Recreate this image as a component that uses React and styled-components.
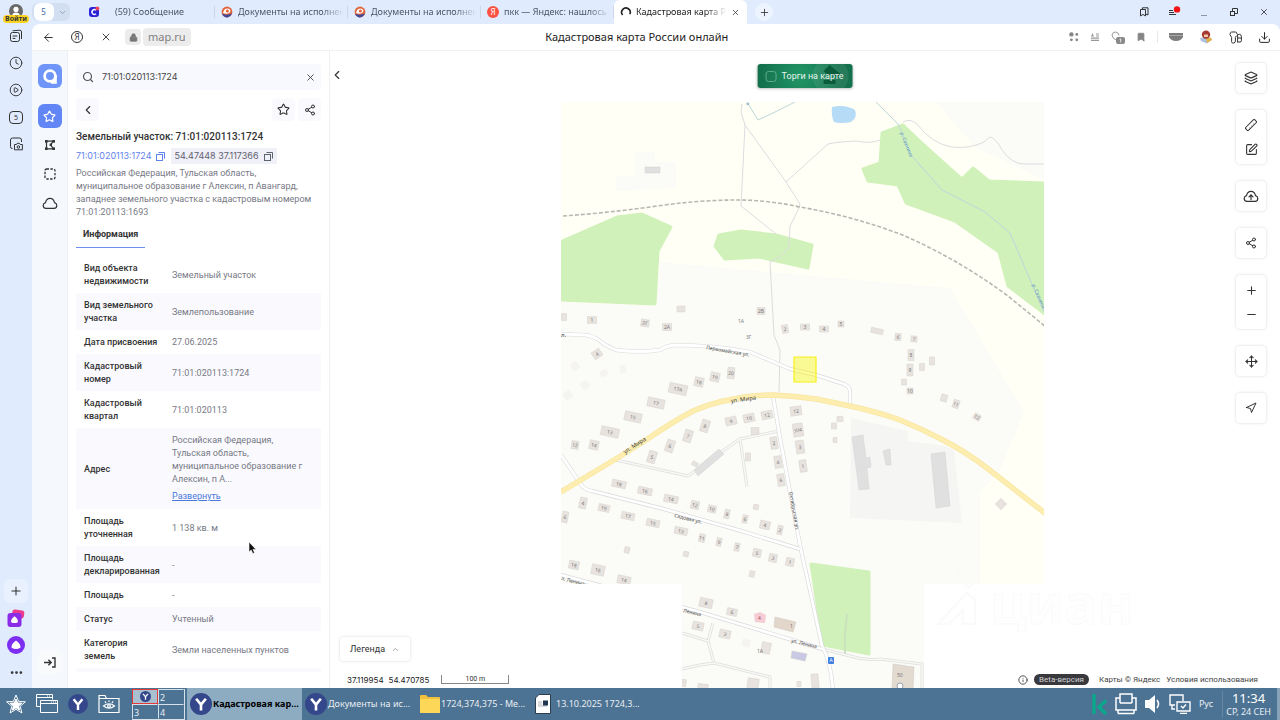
import React from "react";
import styled, { createGlobalStyle } from "styled-components";
import {
  ArrowLeft,
  Bookmark,
  ChevronDown,
  ChevronLeft,
  ChevronUp,
  CirclePlay,
  Clock,
  Download,
  Ellipsis,
  Info,
  Layers,
  Lock,
  Minus,
  Move,
  Navigation,
  Plus,
  Search,
  Share2,
  SquarePen,
  Star,
  X,
} from "lucide-react";

const TABS = [
  { title: "(59) Сообщение", icon: "c", wide: true },
  { title: "Документы на исполнен", icon: "e" },
  { title: "Документы на исполнен", icon: "e" },
  { title: "пкк — Яндекс: нашлось", icon: "ya" },
  { title: "Кадастровая карта Ро", icon: "load", active: true },
];

const FIELDS = [
  ["Вид объекта недвижимости", "Земельный участок"],
  ["Вид земельного участка", "Землепользование"],
  ["Дата присвоения", "27.06.2025"],
  ["Кадастровый номер", "71:01:020113:1724"],
  ["Кадастровый квартал", "71:01:020113"],
  [
    "Адрес",
    "Российская Федерация, Тульская область, муниципальное образование г Алексин, п А...",
    true,
  ],
  ["Площадь уточненная", "1 138 кв. м"],
  ["Площадь декларированная", "-"],
  ["Площадь", "-"],
  ["Статус", "Учтенный"],
  ["Категория земель", "Земли населенных пунктов"],
];

// x, y (center), width, height, angle, label
const HOUSES = [
  [564, 317, 5, 7, 0, ""],
  [592, 320, 9, 7, 0, "1"],
  [645, 323, 8, 7, 8, "2Г"],
  [667, 327, 9, 7, 0, "2А"],
  [681, 309, 8, 6, 0, ""],
  [761, 311, 8, 7, 0, "2В"],
  [785, 329, 6, 8, -10, "2"],
  [805, 327, 9, 6, 0, "3"],
  [824, 329, 9, 6, 0, "4"],
  [841, 324, 6, 6, 0, "5"],
  [877, 331, 12, 5, 12, ""],
  [898, 337, 6, 7, 5, "6"],
  [914, 339, 6, 6, 5, "7"],
  [911, 355, 6, 11, 0, "8"],
  [910, 370, 6, 12, 0, "9"],
  [904, 382, 5, 6, 0, ""],
  [910, 391, 6, 6, 0, "10"],
  [922, 367, 5, 7, 0, ""],
  [932, 361, 5, 8, 0, ""],
  [944, 398, 6, 7, 15, ""],
  [956, 404, 6, 8, 20, "11"],
  [977, 417, 7, 6, 30, "12"],
  [597, 354, 9, 8, -35, "4"],
  [731, 373, 7, 11, 5, "20"],
  [715, 377, 9, 9, 12, "19"],
  [699, 382, 9, 9, 12, "18"],
  [678, 389, 18, 10, 12, "17А"],
  [656, 403, 17, 9, 12, "17"],
  [633, 417, 17, 9, 12, "15"],
  [610, 432, 18, 9, 12, "13"],
  [594, 445, 9, 9, 12, "14"],
  [575, 445, 7, 8, 8, "12"],
  [652, 457, 8, 12, 18, "5"],
  [670, 446, 8, 12, 18, "6"],
  [688, 436, 8, 12, 18, "7"],
  [705, 426, 8, 12, 18, "8"],
  [731, 421, 11, 8, -12, "9"],
  [749, 418, 11, 8, -12, "10"],
  [767, 415, 11, 8, -12, "12"],
  [796, 411, 11, 9, -8, "12"],
  [798, 430, 10, 13, -8, "У/4"],
  [800, 447, 8, 13, -8, "3"],
  [803, 466, 7, 12, -8, "1"],
  [774, 443, 7, 12, -8, "2"],
  [778, 462, 7, 12, -8, "4"],
  [781, 480, 7, 12, -8, "6"],
  [755, 431, 8, 7, 0, ""],
  [748, 457, 5, 8, 0, ""],
  [695, 464, 6, 4, 30, ""],
  [834, 426, 5, 6, 0, ""],
  [840, 419, 6, 5, 0, ""],
  [835, 440, 4, 5, 0, ""],
  [1001, 504, 8, 8, 45, ""],
  [619, 484, 14, 7, 12, "18"],
  [645, 491, 14, 7, 12, "16"],
  [671, 499, 14, 7, 12, "14"],
  [695, 505, 8, 8, 12, "12"],
  [712, 509, 8, 7, 12, "10"],
  [727, 514, 5, 9, 12, "8"],
  [745, 519, 5, 8, 12, "6"],
  [765, 525, 10, 8, 12, "4"],
  [780, 530, 5, 9, 12, "2"],
  [756, 507, 5, 5, 12, ""],
  [583, 503, 7, 11, 12, "4"],
  [565, 517, 6, 11, 12, "6"],
  [604, 508, 11, 7, 12, "19"],
  [628, 516, 13, 7, 12, "17"],
  [653, 523, 13, 7, 12, "15"],
  [681, 531, 13, 7, 12, "13"],
  [702, 538, 6, 8, 12, "11"],
  [719, 542, 5, 8, 12, "9"],
  [737, 547, 5, 8, 12, "7"],
  [757, 553, 8, 8, 12, "5"],
  [773, 558, 8, 8, 12, "3"],
  [790, 562, 8, 8, 12, "1"],
  [627, 550, 5, 6, 12, ""],
  [686, 554, 5, 5, 12, ""],
  [752, 574, 5, 6, 12, ""],
  [574, 565, 10, 8, 12, "18"],
  [598, 570, 13, 10, 12, "16"],
  [624, 580, 13, 8, 12, "14"],
  [706, 603, 13, 9, 12, "8"],
  [732, 612, 10, 7, 12, "6"],
  [698, 626, 11, 8, 12, "5"],
  [725, 634, 11, 8, 12, "3"],
  [766, 648, 9, 11, 12, ""],
  [753, 684, 11, 11, 8, ""],
  [799, 684, 4, 5, 0, ""],
  [815, 681, 7, 14, -5, ""],
  [703, 686, 10, 4, 8, ""],
  [684, 683, 4, 7, 8, ""],
];

const FAINT_HOUSES = [
  [575, 366, 8, 8, -35, ""],
  [604, 373, 8, 7, -25, ""],
  [623, 369, 6, 8, -10, ""],
  [585, 385, 8, 8, -35, ""],
  [568, 395, 8, 8, -35, ""],
  [746, 643, 8, 8, 12, ""],
];

const ROADS = [
  "M561 334L585 335Q594 336 600 341T616 350Q640 353 660 350Q666 346 674 345Q712 345 750 352L790 369L816 375L844 384Q850 387 850 391V404",
  "M773 396L779 432L789 487L801 550L813 604L822 646Q831 662 833 690",
  "M561 455L580 483Q584 490 592 491L660 508L738 530L800 549",
  "M561 575L700 612L822 649",
];

const LANES = [
  "M616 460L688 476L695 471M721 452L740 439L779 431M740 439L747 487",
  "M713 623L708 641L714 663L770 677V690",
  "M682 633L708 641M682 669L700 665L714 663",
  "M822 649L850 656Q865 661 880 659L922 664V690",
];

const PATHS =
  "M742 104L741 112L745 125L741 206L776 234M745 125L786 182L800 204L799 208L790 226L789 246Q784 256 770 262L774 335L780 350L779 392M786 182L828 144Q836 142 856 141Q870 144 880 140M903 122Q910 118 917 124Q932 144 952 147Q970 149 984 142L990 137Q996 138 1002 150Q1012 164 1024 164H1044";

const MAIN_ROAD =
  "M561 492L619 457L646 440Q672 422 693 411Q712 403 729 400Q750 395 773 395Q795 396 816 399L850 406Q878 412 900 420Q922 429 943 440Q966 452 987 468L1046 514";

function Building({ house, faint }) {
  const [x, y, w, h, angle, label] = house;
  return (
    <g transform={`translate(${x} ${y}) rotate(${angle})`}>
      <rect
        x={-w / 2}
        y={-h / 2}
        width={w}
        height={h}
        fill={faint ? "#f5f4f1" : "#e8e3df"}
        stroke={faint ? "none" : "#d6d0cc"}
        strokeWidth="0.5"
      />
      {label && (
        <MapText y="2" textAnchor="middle" $size={5}>
          {label}
        </MapText>
      )}
    </g>
  );
}

function CadastralMap() {
  return (
    <MapDrawing viewBox="330 51 950 637" preserveAspectRatio="xMidYMin slice">
      <clipPath id="tiles">
        <path d="M561 102H1044V584H924V690H682V584H561Z" />
      </clipPath>
      <g clipPath="url(#tiles)" strokeLinejoin="round" fill="none">
        <rect x="561" y="102" width="483" height="590" fill="#fffff5" />
        <path
          d="M936 102L975 147L1044 180V102ZM635 152H655V162H676V188L616 191V176H635Z"
          fill="#fbfcf7"
        />
        <path
          d="M660 262L813 276L950 288L1024 412L1000 470L980 492V690H561V302L656 306Z"
          fill="#fbfcf7"
        />
        <path
          d="M851 418L908 431V441L945 446L954 450L962 523L850 518Z"
          fill="#f5f6f4"
        />
        <g fill="#d1f1ba" stroke="#d1f1ba" strokeWidth="3">
          <path d="M560 242L617 217L642 214L671 227L658 251L655 304L560 300Z" />
          <path d="M719 235L741 231L776 235L812 245L808 268L759 257L725 259L715 246Z" />
          <path d="M882 133L903 125L923 144L962 179L973 168L989 181L1046 183V315L1008 286L999 252L955 221L906 203L898 185L868 181L863 169L880 163Z" />
          <path d="M811 564L869 572V654L823 645Z" />
        </g>
        <path
          d="M832 107Q845 104 855 110Q858 117 851 122Q840 124 834 122Q831 116 832 107Z"
          fill="#b5dbf7"
        />
        <path d={PATHS} stroke="#dcdce0" />
        <path d="M847 614L845 634L845 655" stroke="#c9e2bb" strokeWidth="2" />
        <path
          d="M747 102L758 120L775 112L795 102M876 102L898 124L912 156L942 190L985 212L1010 233L1044 312"
          stroke="#bcd6dc"
        />
        {LANES.map((d) => (
          <g key={d}>
            <path d={d} stroke="#dededd" strokeWidth="3" />
            <path d={d} stroke="#f8f8f6" strokeWidth="1.6" />
          </g>
        ))}
        {ROADS.map((d) => (
          <g key={d}>
            <path d={d} stroke="#d9d9dc" strokeWidth="4" />
            <path d={d} stroke="#ffffff" strokeWidth="2.8" />
          </g>
        ))}
        <path d={MAIN_ROAD} stroke="#f8e5a2" strokeWidth="5.4" />
        <path d={MAIN_ROAD} stroke="#fdeeb0" strokeWidth="4" />
        <path
          d="M563 216Q606 213 650 207Q696 200 737 200Q768 200 800 207Q852 216 900 234Q955 257 1008 296L1046 327"
          stroke="#b9b6b3"
          strokeWidth="1.6"
          strokeDasharray="4 2"
        />
        <g fill="#e0e0e0" stroke="#d2d2d2" strokeWidth="0.5">
          <path d="M852 437L863 435L866 458L870 457L871 467L867 468L869 489L859 490Z" />
          <path d="M883 451L890 449L891 465L886 465Z" />
          <path d="M931 454L945 452L950 506L936 508Z" />
          <path d="M694 470L719 449L724 454L698 476Z" />
          <path d="M645 167H660V173H645Z" />
        </g>
        {FAINT_HOUSES.map((h) => (
          <Building key={h.join()} house={h} faint />
        ))}
        {HOUSES.map((h) => (
          <Building key={h.join()} house={h} />
        ))}
        <g stroke="#cfc8c2" strokeWidth="0.5">
          <path d="M754 614L760 612L766 615L765 623L755 622Z" fill="#f4cdd4" stroke="none" />
          <path d="M775 617L796 622L793 632L774 627Z" fill="#e3d6ca" />
          <path d="M792 651L807 654L805 661L791 658Z" fill="#c9c9e6" />
          <path d="M893 664L914 667L913 690H892Z" fill="#e3dad0" />
        </g>
        <rect
          x="794"
          y="357"
          width="22"
          height="25"
          fill="#fbf700"
          fillOpacity="0.4"
          stroke="#f7f01a"
          strokeWidth="1.2"
        />
        <rect x="828" y="657" width="6" height="7" rx="1" fill="#3f7fe0" />
        <MapText x="831" y="662" textAnchor="middle" $size={5} $color="#fff">
          А
        </MapText>
        <circle cx="900" cy="686" r="3" fill="#fff" stroke="#9aa1b5" />
        <MapText x="758" y="620" $size={5} $color="#b0455a">4</MapText>
        <MapText x="790" y="628" $size={5}>1</MapText>
        <MapText x="897" y="677" $size={5}>50</MapText>
        <MapText x="757" y="653" $size={5}>1А</MapText>
        <MapText x="738" y="323" $size={5}>1А</MapText>
        <MapText x="746" y="339" $size={5}>3Г</MapText>
        <MapText x="561" y="337" $size={6} $color="#444">л.</MapText>

        <MapText transform="translate(706 349) rotate(10)" $size={5} $color="#444">
          Первомайская ул.
        </MapText>
        <MapText transform="translate(731 403) rotate(-8)" $size={6} $color="#444">
          ул. Мира
        </MapText>
        <MapText transform="translate(625 454) rotate(-33)" $size={6} $color="#444">
          ул. Мира
        </MapText>
        <MapText transform="translate(674 517) rotate(14)" $size={5} $color="#444">
          Садовая ул.
        </MapText>
        <MapText transform="translate(789 492) rotate(80)" $size={5} $color="#444">
          Октябрьская ул.
        </MapText>
        <MapText transform="translate(561 580) rotate(14)" $size={5} $color="#444">
          л. Ленина
        </MapText>
        <MapText transform="translate(683 612) rotate(14)" $size={5} $color="#444">
          Ленина
        </MapText>
        <MapText transform="translate(791 642) rotate(14)" $size={5} $color="#444">
          ул. Ленина
        </MapText>
        <MapText transform="translate(900 133) rotate(68)" $size={5} $color="#5b94c0">
          р. Сазнина
        </MapText>
        <MapText transform="translate(1032 285) rotate(66)" $size={5} $color="#5b94c0">
          р. Сазнина
        </MapText>
        <MapText transform="translate(746 103) rotate(70)" $size={5} $color="#5b94c0">
          а
        </MapText>
      </g>
      <g fill="none" stroke="#fafaf9" strokeWidth="2">
        <circle cx="969" cy="572" r="5" />
        <path d="M969 588Q957 578 959 569Q962 561 970 561Q980 562 979 573Q977 580 969 588ZM938 624L967 593L975 600V624H963V610L949 624Z" />
      </g>
      <Brand x="990" y="624">
        циан
      </Brand>
    </MapDrawing>
  );
}

function TabIcon({ kind }) {
  return (
    <svg width="12" height="12" viewBox="0 0 12 12" fill="none">
      {kind === "c" && (
        <>
          <rect x="1" y="1" width="10" height="10" rx="3" fill="#2b22d8" />
          <path d="M8 4.2A2.4 2.4 0 1 0 8 7.8" stroke="#fff" strokeWidth="1.4" />
          <circle cx="9.4" cy="2.6" r="2" fill="#f0455b" />
        </>
      )}
      {kind === "e" && (
        <>
          <circle cx="6" cy="6" r="5.4" fill="#e0643c" />
          <path d="M0.8 8Q3 11.4 6 11.4T11 7.6Q7 9.5 0.8 8Z" fill="#3b4a9c" />
          <path d="M2 7Q3 2.4 7 2.6Q11 4 8.4 6.8Q5.4 8.6 2 7Z" fill="#fff" />
          <circle cx="6.4" cy="5" r="1.5" fill="#e0643c" />
        </>
      )}
      {kind === "load" && (
        <path
          d="M2.6 9A4.3 4.3 0 1 1 9.8 8.2"
          stroke="#222"
          strokeWidth="1.6"
        />
      )}
    </svg>
  );
}

function YandexBall({ size = 20 }) {
  return (
    <svg width={size} height={size} viewBox="0 0 20 20" fill="none">
      <circle cx="10" cy="10" r="10" fill="#34478b" />
      <path
        d="M5.6 5.2L10 10.6L14.4 5.2M10 10.6V16"
        stroke="#fff"
        strokeWidth="2.4"
      />
    </svg>
  );
}

function CloudIcon({ upload }) {
  return (
    <svg width="16" height="13" viewBox="0 0 16 13" fill="none" stroke="#333" strokeWidth="1.2" strokeLinecap="round">
      <path d="M4 11.4Q1.2 11.2 1.2 8.4Q1.2 6.2 3.5 5.6Q4.4 1.4 8 1.4T12.5 5.6Q14.8 6.2 14.8 8.4Q14.8 11.2 12 11.4Z" />
      {upload && <path d="M8 9.6V5M6 6.8L8 4.8L10 6.8" />}
    </svg>
  );
}

function CopyIcon() {
  return (
    <svg width="9" height="9" viewBox="0 0 9 9" fill="none" stroke="currentColor">
      <rect x="0.5" y="2.5" width="6" height="6" />
      <path d="M2.5 0.5H8.5V6.5" />
    </svg>
  );
}

export default function App() {
  return (
    <>
      <GlobalStyle />
      <Screen>
        <BrowserSide>
          <Avatar aria-label="Войти">
            <svg width="14" height="11" viewBox="0 0 14 11">
              <circle cx="7" cy="7" r="7" fill="#6a6a6a" />
              <circle cx="7" cy="5.4" r="2.6" fill="#fff" />
              <path d="M2.6 13Q3 8.6 7 8.6T11.4 13Z" fill="#fff" />
            </svg>
            <AvatarLabel>Войти</AvatarLabel>
          </Avatar>
          <SideButton aria-label="Коллекции">
            <svg width="14" height="14" viewBox="0 0 14 14" fill="none" stroke="#333">
              <rect x="1.5" y="3.5" width="9" height="9" rx="2" />
              <path d="M3.5 1.8L11 1.2Q12.6 1.4 12.5 3V10M3.6 7H8.4M3.6 9.4H6.4" />
            </svg>
          </SideButton>
          <SideButton aria-label="История"><Clock size={14} strokeWidth={1.6} /></SideButton>
          <SideButton aria-label="Видео"><CirclePlay size={14} strokeWidth={1.6} /></SideButton>
          <SideButton aria-label="Вкладки"><TabCount>5</TabCount></SideButton>
          <SideButton aria-label="Скриншот">
            <svg width="14" height="14" viewBox="0 0 14 14" fill="none" stroke="#333">
              <path d="M3.5 11.5H3Q1.5 11.5 1.5 9.5V3Q1.5 1 3.5 1H10.5Q12.5 1 12.5 3V5" />
              <path d="M5.5 7.5H7.5L8.2 6.3H10.4L11.2 7.5H13.4V12.8H5.5Z" />
              <circle cx="9.4" cy="10" r="1.3" />
            </svg>
          </SideButton>
          <SideSpacer />
          <SideButton $light aria-label="Добавить"><Plus size={14} strokeWidth={1.8} /></SideButton>
          <SideButton aria-label="Алиса Про">
            <svg width="18" height="18" viewBox="0 0 18 18">
              <rect x="5" y="1" width="12" height="8" rx="2.5" fill="#ec3a8c" transform="rotate(8 11 6)" />
              <rect x="0.5" y="4" width="14" height="14" rx="3" fill="#8a2be8" />
              <path d="M7.5 7.2Q11.6 10.4 10.8 13.2Q7.5 15 4.2 13.2Q3.4 10.4 7.5 7.2Z" fill="#fff" />
            </svg>
          </SideButton>
          <SideButton aria-label="Алиса">
            <svg width="18" height="18" viewBox="0 0 18 18">
              <circle cx="9" cy="9" r="9" fill="#7b2df0" />
              <path d="M9 4.4Q14.4 8.4 13.4 11.8Q9 14.4 4.6 11.8Q3.6 8.4 9 4.4Z" fill="#fff" />
            </svg>
          </SideButton>
          <SideButton aria-label="Ещё"><Ellipsis size={15} strokeWidth={2.4} /></SideButton>
        </BrowserSide>

        <Browser>
          <TabStrip>
            <TabGroup>
              <GroupNumber>5</GroupNumber>
              <ChevronDown size={9} color="#7f8ea6" />
            </TabGroup>
            {TABS.map((tab, i) => (
              <Tab key={i} $active={tab.active} $wide={tab.wide}>
                {tab.icon === "ya" ? <RedYa>Я</RedYa> : <TabIcon kind={tab.icon} />}
                <TabTitle>{tab.title}</TabTitle>
                {tab.active && <X size={9} color="#333" />}
              </Tab>
            ))}
            <NewTab aria-label="Новая вкладка"><Plus size={11} strokeWidth={1.8} /></NewTab>
            <WindowButtons>
              <WindowButton aria-label="Панель закладок">
                <svg width="10" height="10" viewBox="0 0 10 10" fill="none" stroke="#333">
                  <path d="M1.5 2.5H6.5V9L4 7.4L1.5 9Z" />
                  <path d="M3.4 2.4V0.8H9V8L6.6 7" />
                </svg>
              </WindowButton>
              <WindowButton aria-label="Меню">
                <svg width="14" height="12" viewBox="0 0 14 12" fill="none" stroke="#333">
                  <path d="M2 4.5H6M2 6.5H7M2 8.5H9" />
                  <circle cx="10" cy="3.4" r="3.2" fill="#f31515" stroke="none" />
                </svg>
              </WindowButton>
              <WindowButton aria-label="Свернуть">
                <svg width="8" height="10" viewBox="0 0 8 10" stroke="#8c97a8"><path d="M1 8.5H7" /></svg>
              </WindowButton>
              <WindowButton aria-label="Развернуть окно">
                <svg width="10" height="10" viewBox="0 0 10 10" fill="none" stroke="#333">
                  <rect x="1.5" y="4.5" width="4" height="4" />
                  <path d="M3.5 4V1.5H8.5V6.5H6" />
                </svg>
              </WindowButton>
              <WindowButton aria-label="Закрыть"><X size={10} strokeWidth={2} /></WindowButton>
            </WindowButtons>
          </TabStrip>

          <Page>
            <AddressBar>
              <BarButton aria-label="Назад"><ArrowLeft size={13} strokeWidth={1.8} /></BarButton>
              <BarButton aria-label="Яндекс"><YaBadge>Я</YaBadge></BarButton>
              <BarButton aria-label="Остановить"><X size={12} strokeWidth={1.8} /></BarButton>
              <LockBox><Lock size={9} fill="#777" color="#777" /></LockBox>
              <Host>map.ru</Host>
              <PageTitle>Кадастровая карта России онлайн</PageTitle>
              <Extensions>
                <svg width="10" height="10" viewBox="0 0 10 10" fill="#858585">
                  <circle cx="2.4" cy="2.4" r="2.2" /><circle cx="7.8" cy="2.4" r="1.4" />
                  <circle cx="2.4" cy="7.8" r="1.4" /><circle cx="7.8" cy="7.8" r="1.4" />
                </svg>
                <svg width="10" height="10" viewBox="0 0 10 10" stroke="#999" strokeWidth="1.2">
                  <path d="M1 6.2H9M1 8.4H9M1 4H4M6 4H9M2.5 1.5V4M6 2H9" />
                </svg>
                <svg width="14" height="13" viewBox="0 0 14 13" fill="none" stroke="#999">
                  <path d="M5 9Q1 7 1 4Q1.5 1 4.5 1Q8 1.4 8 4.5" />
                  <rect x="5" y="6" width="9" height="7" rx="2" fill="#8a8a8a" stroke="none" />
                  <path d="M8.6 8.4L9.7 7.8V11.4" stroke="#fff" strokeWidth="0.8" />
                </svg>
                <Bookmark size={10} fill="#858585" color="#858585" />
                <BarDivider />
                <svg width="14" height="8" viewBox="0 0 14 8">
                  <path d="M0 0H14V4Q12 8 7 8T0 4Z" fill="#7d7d7d" />
                  <path d="M0 2.5H14" stroke="#a5a5a5" />
                </svg>
                <svg width="14" height="14" viewBox="0 0 14 14">
                  <path d="M1 8L7 7L13 9L8 13.5L2 11Z" fill="#a9c0e0" />
                  <path d="M7 8L12 7.5L13 10L8 13Z" fill="#e2b24c" />
                  <circle cx="7" cy="4.6" r="4.2" fill="#a63a32" />
                  <path d="M5 4.5H9V7H5Z" fill="#f0c9a8" />
                </svg>
                <svg width="13" height="13" viewBox="0 0 13 13" fill="none" stroke="#333">
                  <path d="M4.8 12H3.6Q2.6 12 2.6 10.6V6.4L1 3.6Q0.8 1.4 2.6 1H6.4Q7.8 1 8 3" />
                  <path d="M4.8 12Q6.4 11.6 6.4 10V6.4L7.6 4.6M8.6 3.4H10.6Q12.4 3.6 12.4 5.4V9.8Q12.4 11 11 11H8M8.6 7H12.4M8.6 3.4V11" />
                </svg>
                <Download size={13} strokeWidth={1.8} color="#222" />
              </Extensions>
            </AddressBar>

            <Site>
              <Rail>
                <RailButton $fill="#6f95f8" aria-label="Главная">
                  <svg width="18" height="18" viewBox="0 0 18 18" fill="none" stroke="#fff" strokeWidth="2.8">
                    <circle cx="9" cy="9" r="5.4" />
                    <path d="M14.4 8V15.4H10" />
                  </svg>
                </RailButton>
                <RailGap />
                <RailButton $fill="#6386f6" aria-label="Избранное">
                  <Star size={13} color="#fff" strokeWidth={2.2} />
                </RailButton>
                <RailButton aria-label="Область">
                  <svg width="12" height="12" viewBox="0 0 12 12" fill="none" stroke="#333" strokeWidth="1.2">
                    <path d="M2.5 1.8V10.2M9.5 1.8L6.6 5.8L9.5 10.2M2.5 2.2H9.5M2.5 9.8H9.5" />
                    <g fill="#333" stroke="none">
                      <rect x="1" y="1" width="2.6" height="2.6" /><rect x="8.4" y="1" width="2.6" height="2.6" />
                      <rect x="1" y="8.4" width="2.6" height="2.6" /><rect x="8.4" y="8.4" width="2.6" height="2.6" />
                      <rect x="5.6" y="4.6" width="2.4" height="2.4" />
                    </g>
                  </svg>
                </RailButton>
                <RailButton aria-label="Выделение">
                  <svg width="12" height="12" viewBox="0 0 12 12" fill="none">
                    <rect x="1" y="1" width="10" height="10" rx="1.6" stroke="#333" strokeWidth="1.3" strokeDasharray="2.4 1.4" />
                  </svg>
                </RailButton>
                <RailButton aria-label="Облако"><CloudIcon /></RailButton>
                <SideSpacer />
                <RailButton $fill="#f9fafc" aria-label="Войти в аккаунт">
                  <svg width="13" height="11" viewBox="0 0 13 11" fill="none" stroke="#333" strokeWidth="1.4">
                    <path d="M1 5.5H8M5.4 2.8L8.2 5.5L5.4 8.2M9 1H12V10H9" />
                  </svg>
                </RailButton>
              </Rail>

              <Panel>
                <SearchBox>
                  <Search size={12} strokeWidth={2.4} color="#555" />
                  <SearchInput aria-label="Поиск" defaultValue="71:01:020113:1724" />
                  <ClearButton aria-label="Очистить"><X size={11} strokeWidth={1.8} /></ClearButton>
                </SearchBox>
                <PanelTools>
                  <ToolButton aria-label="Назад"><ChevronLeft size={14} /></ToolButton>
                  <ToolSpacer />
                  <ToolButton aria-label="В избранное"><Star size={13} /></ToolButton>
                  <ToolButton aria-label="Поделиться"><Share2 size={12} /></ToolButton>
                </PanelTools>
                <Heading>Земельный участок: 71:01:020113:1724</Heading>
                <Identifiers>
                  <CadLink href="#parcel">71:01:020113:1724 <CopyIcon /></CadLink>
                  <Coords>54.47448 37.117366 <CopyIcon /></Coords>
                </Identifiers>
                <Description>
                  Российская Федерация, Тульская область, муниципальное образование г
                  Алексин, п Авангард, западнее земельного участка с кадастровым номером
                  71:01:20113:1693
                </Description>
                <InfoTab>Информация</InfoTab>
                <InfoTable>
                  <tbody>
                    {FIELDS.map(([name, value, expandable]) => (
                      <tr key={name}>
                        <th scope="row">{name}</th>
                        <td>
                          {value}
                          {expandable && <Expand href="#address">Развернуть</Expand>}
                        </td>
                      </tr>
                    ))}
                  </tbody>
                </InfoTable>
              </Panel>

              <MapArea>
                <CadastralMap />
                <CollapseButton aria-label="Свернуть панель"><ChevronLeft size={14} /></CollapseButton>
                <AuctionToggle>
                  <Gavel width="38" height="24" viewBox="0 0 38 24">
                    <circle cx="19" cy="12" r="18" fill="#fff" fillOpacity="0.08" />
                    <path d="M12 7L18 1L29 10L26 13L20 10L17 12Z" fill="#0b5c3d" />
                    <path d="M12 16H24V20H12Z" fill="#0b5c3d" />
                  </Gavel>
                  <AuctionCheck type="checkbox" />
                  <AuctionText>Торги на карте</AuctionText>
                </AuctionToggle>
                <Controls>
                  <Control><MapButton aria-label="Слои"><Layers size={14} /></MapButton></Control>
                  <Control>
                    <MapButton aria-label="Линейка">
                      <svg width="12" height="12" viewBox="0 0 12 12" fill="none" stroke="#333">
                        <rect x="-0.4" y="4" width="12.8" height="4" rx="1.2" transform="rotate(-45 6 6)" />
                        <path d="M4.2 8.6L5 9.4M6.2 6.6L7 7.4M8.2 4.6L9 5.4" strokeWidth="0.6" />
                      </svg>
                    </MapButton>
                    <MapButton aria-label="Редактировать"><SquarePen size={13} /></MapButton>
                  </Control>
                  <Control><MapButton aria-label="Загрузить"><CloudIcon upload /></MapButton></Control>
                  <Control><MapButton aria-label="Поделиться"><Share2 size={12} /></MapButton></Control>
                  <Control>
                    <MapButton aria-label="Приблизить"><Plus size={13} /></MapButton>
                    <MapButton aria-label="Отдалить"><Minus size={13} /></MapButton>
                  </Control>
                  <Control><MapButton aria-label="Переместить"><Move size={13} /></MapButton></Control>
                  <Control><MapButton aria-label="Моё положение"><Navigation size={12} /></MapButton></Control>
                </Controls>
                <Bottom>
                  <Legend>Легенда <ChevronUp size={9} color="#888" /></Legend>
                  <BottomRow>
                    <Position><span>37.119954</span><span>54.470785</span></Position>
                    <Scale>100 m</Scale>
                    <BottomSpacer />
                    <Info size={10} color="#333" />
                    <Beta>Beta-версия</Beta>
                    <MapLink href="#yandex">Карты © Яндекс</MapLink>
                    <MapLink href="#terms">Условия использования</MapLink>
                  </BottomRow>
                </Bottom>
              </MapArea>
            </Site>
          </Page>
        </Browser>

        <Taskbar>
          <Launcher aria-label="Меню">
            <svg width="20" height="20" viewBox="0 0 20 20" fill="none" stroke="#fff">
              <path d="M10 1L12.6 7.4L19.4 7.8L14.2 12.2L15.9 19L10 15.3L4.1 19L5.8 12.2L0.6 7.8L7.4 7.4Z" />
              <path d="M10 5L11.6 9L15.8 9.2L12.6 12L13.6 16L10 13.8L6.4 16L7.4 12L4.2 9.2L8.4 9Z" fill="#fff" />
            </svg>
          </Launcher>
          <Launcher aria-label="Окна">
            <svg width="22" height="20" viewBox="0 0 22 20" fill="none" stroke="#fff">
              <path d="M4.5 12.5H0.5V0.5H16.5V5.5M0.5 3.5H16.5" />
              <path d="M4.5 6.5H21.5V18.5H4.5ZM4.5 9.5H21.5" />
              <path d="M11 2H15M15 8H20" strokeDasharray="1 1" />
            </svg>
          </Launcher>
          <Launcher aria-label="Яндекс Браузер"><YandexBall /></Launcher>
          <Launcher aria-label="Файлы">
            <svg width="22" height="20" viewBox="0 0 22 20" fill="none" stroke="#fff" strokeWidth="1.2">
              <path d="M1 18.5V1.5H7L8.5 4.5H21V18.5ZM1 4.5H8.5" />
              <path d="M5.5 12Q11 7.5 16.5 12Q11 16.5 5.5 12ZM11 6.5V8M7 7.4L8 9M15 7.4L14 9" />
              <circle cx="11" cy="12" r="1.4" />
            </svg>
          </Launcher>
          <Pager>
            <PagerCell $current><YandexBall size={11} /></PagerCell>
            <PagerCell>2</PagerCell>
            <PagerCell>3</PagerCell>
            <PagerCell>4</PagerCell>
          </Pager>
          <Task $active><YandexBall size={22} />Кадастровая кар...</Task>
          <Task><YandexBall size={22} />Документы на ис...</Task>
          <Task>
            <svg width="20" height="20" viewBox="0 0 20 20">
              <path d="M0 2Q0 1 1 1H6L8 3H19Q20 3 20 4V19H0Z" fill="#f0bf3e" />
              <path d="M0 5H20V18Q20 19 19 19H1Q0 19 0 18Z" fill="#fdd757" />
            </svg>
            1724,374,375 - Ме...
          </Task>
          <Task $doc>
            <svg width="16" height="20" viewBox="0 0 16 20">
              <path d="M4 0.5H15.5V19.5H0.5V4Z" fill="#fff" stroke="#2e3d4c" />
              <path d="M3 8H7M3 10H7M3 12H12" stroke="#b5b5b5" />
              <rect x="8" y="6.5" width="5" height="5" fill="#1f3550" />
            </svg>
            13.10.2025 1724,3...
          </Task>
          <Tray>
            <svg width="15" height="22" viewBox="0 0 15 22" fill="none" stroke="#0aa78c" strokeWidth="3.4">
              <path d="M2 1V21M14 7.5L7 14L14 21" />
            </svg>
            <svg width="22" height="22" viewBox="0 0 22 22" fill="none" stroke="#fff" strokeWidth="1.5">
              <path d="M5 10V1H17V10M5 5H1V17H21V5H17M5 10H17M3 20.5H19M3 17V20.5M19 17V20.5" />
            </svg>
            <svg width="16" height="18" viewBox="0 0 16 18" fill="#fff">
              <path d="M0 5H4L10 0V18L4 13H0Z" />
              <path d="M12 5Q15 9 12 13" fill="none" stroke="#fff" strokeWidth="1.6" />
            </svg>
            <svg width="22" height="20" viewBox="0 0 22 20" fill="none" stroke="#fff" strokeWidth="1.4">
              <path d="M6 11H1V1H14V7M8 8H21V17H8ZM11 19.5H18M3 11V15H6" />
              <path d="M12 12L14 14L17 10.5" />
            </svg>
            <Lang>Рус</Lang>
            <ClockBox>
              <Time>11:34</Time>
              <DateText>СР, 24 СЕН</DateText>
            </ClockBox>
          </Tray>
        </Taskbar>
        <Cursor width="9" height="14" viewBox="0 0 9 14">
          <path d="M1 1V11L3.2 9L4.8 12.6L6.6 11.8L5 8.4H8Z" fill="#111" stroke="#fff" strokeWidth="0.6" />
        </Cursor>
      </Screen>
    </>
  );
}

const GlobalStyle = createGlobalStyle`
  * {
    box-sizing: border-box;
  }

  body {
    margin: 0;
    font-family: Roboto, sans-serif;
    color: #333;
  }

  button {
    display: flex;
    align-items: center;
    justify-content: center;
    border: 0;
    padding: 0;
    background: none;
    color: #333;
    font-family: inherit;
  }

  svg {
    flex-shrink: 0;
  }
`;

const Screen = styled.div`
  display: grid;
  grid-template-columns: 32px 1fr;
  grid-template-rows: minmax(0, 1fr) 32px;
  height: 100vh;
  background: #e0ecfe;
  overflow: hidden;
`;

const BrowserSide = styled.nav`
  display: flex;
  flex-direction: column;
  align-items: center;
  padding: 3px 0 1px;
`;

const Avatar = styled.button`
  flex-direction: column;
  height: 21px;
`;

const AvatarLabel = styled.span`
  padding: 0 2px;
  border-radius: 4px;
  background: #fbd323;
  font: 700 7px/8px "Noto Sans", sans-serif;
`;

const SideButton = styled.button`
  width: 24px;
  height: 24px;
  margin-bottom: 3px;
  border-radius: 6px;
  background: ${(props) => (props.$light ? "#e9f1fe" : "none")};
`;

const SideSpacer = styled.div`
  flex: 1;
`;

const TabCount = styled.span`
  width: 14px;
  border: 1px solid #333;
  border-radius: 4px;
  font: 7px/11px "Noto Sans", sans-serif;
`;

const Browser = styled.div`
  display: flex;
  flex-direction: column;
  min-width: 0;
  min-height: 0;
`;

const TabStrip = styled.header`
  display: flex;
  height: 24px;
  flex-shrink: 0;
  align-items: center;
  font: 9px/12px "Noto Sans", sans-serif;
`;

const TabGroup = styled.button`
  width: 38px;
  height: 18px;
  margin-right: 12px;
  gap: 4px;
  border-radius: 6px;
  background: #d2dff2;
`;

const GroupNumber = styled.span`
  width: 20px;
  margin-left: -2px;
  border-radius: 6px;
  background: #fbfdff;
  color: #44699b;
  font: 8px/18px "Noto Sans", sans-serif;
`;

const Tab = styled.button`
  flex: 0 1 133px;
  min-width: 0;
  height: 24px;
  padding: 0 ${(props) => (props.$active ? 7 : 4)}px 0 6px;
  gap: ${(props) => (props.$wide ? "15px" : props.$active ? "4px" : "5px")};
  justify-content: flex-start;
  border-radius: ${(props) => (props.$active ? "6px 6px 0 0" : 0)};
  background: ${(props) =>
    props.$active
      ? "#fff"
      : "linear-gradient(#cbd8ea, #cbd8ea) right center / 1px 12px no-repeat"};
  color: ${(props) => (props.$active ? "#222" : "#4c5563")};
  font: inherit;
`;

const TabTitle = styled.span`
  flex: 1;
  min-width: 0;
  white-space: nowrap;
  text-align: left;
  mask-image: linear-gradient(to left, transparent, #000 22px);
`;

const RedYa = styled.span`
  width: 12px;
  border-radius: 50%;
  background: #fc5242;
  color: #fff;
  font: 8px/12px "Noto Sans", sans-serif;
  text-align: center;
`;

const NewTab = styled.button`
  width: 18px;
  height: 18px;
  margin-left: 8px;
  border-radius: 50%;
  background: #edf4ff;
`;

const WindowButtons = styled.div`
  display: flex;
  gap: 10px;
  margin-left: auto;
  padding-right: 6px;
`;

const WindowButton = styled.button`
  width: 20px;
  height: 20px;
`;

const Page = styled.div`
  display: flex;
  flex: 1;
  flex-direction: column;
  min-height: 0;
  border-radius: 8px 8px 0 0;
  background: #fff;
  overflow: hidden;
`;

const AddressBar = styled.div`
  display: flex;
  flex-shrink: 0;
  align-items: center;
  height: 27px;
  padding: 0 9px 0 6px;
  border-bottom: 1px solid #f1f2f4;
`;

const BarButton = styled.button`
  width: 20px;
  height: 20px;
  margin-right: 9px;
`;

const YaBadge = styled.span`
  width: 12px;
  border: 1px solid #333;
  border-radius: 50%;
  font: 8px/10px "Noto Sans", sans-serif;
  text-align: center;
`;

const LockBox = styled.span`
  display: flex;
  align-items: center;
  justify-content: center;
  width: 16px;
  height: 16px;
  margin-right: 2px;
  border-radius: 4px;
  background: #ececec;
`;

const Host = styled.span`
  padding: 0 5px;
  border-radius: 4px;
  background: #ececec;
  color: #7f7f7f;
  font: 11px/18px "Noto Sans", sans-serif;
`;

const PageTitle = styled.h1`
  flex: 1;
  margin: 0;
  padding-left: 14px;
  color: #1c1c1c;
  font: 400 11px/18px "Noto Sans", sans-serif;
  text-align: center;
`;

const Extensions = styled.div`
  display: flex;
  align-items: center;
  gap: 11px;

  svg:nth-of-type(n + 6) {
    margin-left: 5px;
  }
`;

const BarDivider = styled.span`
  width: 1px;
  height: 12px;
  background: #e8e8e8;
`;

const Site = styled.div`
  display: flex;
  flex: 1;
  min-height: 0;
`;

const Rail = styled.nav`
  display: flex;
  flex-direction: column;
  align-items: center;
  gap: 5px;
  width: 36px;
  padding: 13px 0 14px;
  border-right: 1px solid #ebeff5;
  background: #f5f8fd;
`;

const RailButton = styled.button`
  width: 24px;
  height: 24px;
  border-radius: 6px;
  background: ${(props) => props.$fill || "none"};
`;

const RailGap = styled.div`
  height: 6px;
`;

const Panel = styled.aside`
  display: flex;
  flex-direction: column;
  align-items: flex-start;
  width: 262px;
  padding: 13px 8px 15px;
  border-right: 1px solid #eef0f6;
  background: #fff;
  overflow: hidden;
`;

const SearchBox = styled.label`
  display: flex;
  align-items: center;
  width: 100%;
  height: 26px;
  padding: 0 5px 0 6px;
  gap: 8px;
  border-radius: 4px;
  background: #f7f9fe;
`;

const SearchInput = styled.input`
  flex: 1;
  min-width: 0;
  padding: 0;
  border: 0;
  background: none;
  color: #444;
  font: 9px/14px Inter, sans-serif;
`;

const ClearButton = styled.button`
  width: 12px;
  height: 20px;
`;

const PanelTools = styled.div`
  display: flex;
  gap: 3px;
  width: 100%;
  margin: 8px 0 7px;
`;

const ToolSpacer = styled.div`
  flex: 1;
`;

const ToolButton = styled.button`
  width: 23px;
  height: 23px;
  border-radius: 4px;
  background: #fafafe;
`;

const Heading = styled.h2`
  margin: 0;
  font-size: 10px;
  font-weight: 500;
  line-height: 18px;
`;

const Identifiers = styled.div`
  display: flex;
  align-items: center;
  gap: 6px;
  margin: 2px 0 3px;
  font: 9px/16px Inter, sans-serif;
`;

const CadLink = styled.a`
  display: flex;
  align-items: center;
  gap: 4px;
  color: #5f83ec;
  text-decoration: none;
`;

const Coords = styled.button`
  gap: 5px;
  padding: 0 4px;
  border-radius: 2px;
  background: #f0f0f8;
  color: #5f6070;
  font: inherit;
`;

const Description = styled.p`
  width: 100%;
  margin: 0;
  padding-bottom: 7px;
  color: #777985;
  font-size: 9px;
  line-height: 13px;
`;

const InfoTab = styled.button`
  flex-shrink: 0;
  height: 22px;
  padding: 0 7px 5px;
  border-bottom: 1px solid #6d8ff0;
  font-size: 9px;
  font-weight: 700;
`;

const InfoTable = styled.table`
  width: 100%;
  margin-top: 8px;
  border-bottom: 4px solid #fafafe;
  border-collapse: collapse;
  table-layout: fixed;
  font-size: 9px;
  line-height: 13px;
  text-align: left;

  tr:nth-child(even) {
    background: #fafafe;
  }

  th {
    width: 88px;
    padding: 6px 4px 5px 8px;
    font-weight: 500;
  }

  td {
    padding: 6px 14px 5px 8px;
    color: #777985;
  }
`;

const Expand = styled.a`
  display: block;
  margin: 4px 0 1px;
  color: #4c78dc;
`;

const MapArea = styled.main`
  position: relative;
  flex: 1;
  min-width: 0;
  background: #fff;
`;

const MapDrawing = styled.svg`
  display: block;
  width: 100%;
  height: 100%;
`;

const MapText = styled.text`
  fill: ${(props) => props.$color || "#777"};
  font-family: "Noto Sans", sans-serif;
  font-size: ${(props) => props.$size}px;
`;

const Brand = styled.text`
  fill: #fefefe;
  stroke: #fafafa;
  font: 700 56px "Noto Sans", sans-serif;
`;

const CollapseButton = styled.button`
  position: absolute;
  top: 13px;
  left: 0;
  width: 14px;
  height: 22px;
  background: #fff;
`;

const AuctionToggle = styled.label`
  position: absolute;
  top: 13px;
  left: 50%;
  display: flex;
  align-items: center;
  gap: 5px;
  height: 24px;
  padding: 0 9px 0 8px;
  transform: translateX(-50%);
  border-radius: 3px;
  background: radial-gradient(circle at 45%, #229766, #14704d 75%);
  box-shadow: 0 1px 3px rgba(0, 0, 0, 0.25);
  color: #e6f4ee;
  font-size: 9px;
  white-space: nowrap;
`;

const AuctionCheck = styled.input`
  appearance: none;
  width: 11px;
  height: 11px;
  margin: 0;
  border: 1px solid #5cab8b;
  border-radius: 3px;
`;

const AuctionText = styled.span`
  position: relative;
`;

const Gavel = styled.svg`
  position: absolute;
  right: 3px;
`;

const Controls = styled.div`
  position: absolute;
  top: 12px;
  right: 14px;
  display: flex;
  flex-direction: column;
  gap: 17px;
`;

const Control = styled.div`
  padding: 3px;
  border-radius: 4px;
  background: #fff;
  box-shadow: 0 0 3px rgba(0, 0, 0, 0.16);
`;

const MapButton = styled.button`
  width: 24px;
  height: 24px;
`;

const Bottom = styled.div`
  position: absolute;
  right: 22px;
  bottom: 2px;
  left: 10px;
`;

const Legend = styled.button`
  height: 24px;
  padding: 0 10px;
  gap: 6px;
  border-radius: 3px;
  background: #fff;
  box-shadow: 0 0 3px rgba(0, 0, 0, 0.16);
  font-size: 9px;
`;

const BottomRow = styled.div`
  display: flex;
  align-items: center;
  gap: 6px;
  height: 13px;
  margin-top: 12px;
  padding-left: 7px;
  font-size: 8px;
`;

const Position = styled.span`
  display: flex;
  gap: 5px;
  margin-right: 6px;
  color: #222;
  font-family: Inter, sans-serif;
`;

const Scale = styled.span`
  width: 68px;
  border: solid #888;
  border-width: 0 1px 1px;
  font-size: 7px;
  line-height: 8px;
  text-align: center;
`;

const BottomSpacer = styled.div`
  flex: 1;
`;

const Beta = styled.span`
  margin-right: 4px;
  padding: 0 5px;
  border-radius: 6px;
  background: #38383d;
  color: #d2d2d6;
  line-height: 11px;
`;

const MapLink = styled.a`
  color: #444;
  text-decoration: none;
`;

const Taskbar = styled.footer`
  grid-column: 1 / -1;
  display: flex;
  align-items: center;
  border-right: 3px solid #86a3b8;
  background: #4d7394;
  color: #e8eef3;
  font: 9px/14px "Noto Sans", sans-serif;
`;

const Launcher = styled.button`
  width: 31px;
  height: 32px;
`;

const Pager = styled.div`
  display: grid;
  grid-template-columns: 1fr 1fr;
  width: 53px;
  margin: 0 2px 0 8px;
  border: solid #d7e1e9;
  border-width: 0 1px 1px 0;
`;

const PagerCell = styled.span`
  display: flex;
  align-items: flex-end;
  justify-content: ${(props) => (props.$current ? "center" : "flex-start")};
  height: 15px;
  padding: 0 1px 1px;
  border: 1px solid ${(props) => (props.$current ? "#e53935" : "transparent")};
  border-top-color: ${(props) => (props.$current ? "#e53935" : "#d7e1e9")};
  border-left-color: ${(props) => (props.$current ? "#e53935" : "#d7e1e9")};
  background: ${(props) => (props.$current ? "#a9c0d0" : "none")};
  line-height: 9px;
`;

const Task = styled.button`
  flex: 0 1 ${(props) => (props.$doc ? 120 : 115)}px;
  height: 32px;
  padding-left: 3px;
  gap: ${(props) => (props.$doc ? 5 : 1)}px;
  justify-content: flex-start;
  background: ${(props) => (props.$active ? "#8dacc1" : "none")};
  color: ${(props) => (props.$active ? "#000" : "#e8eef3")};
  font: ${(props) => (props.$active ? 700 : 400)} 9px/14px "Noto Sans", sans-serif;
  white-space: nowrap;
`;

const Tray = styled.div`
  display: flex;
  align-items: center;
  gap: 8px;
  margin-left: auto;
  padding-right: 6px;
`;

const Lang = styled.span`
  margin-right: 1px;
`;

const ClockBox = styled.div`
  display: flex;
  flex-direction: column;
  align-items: center;
  padding-left: 3px;
  border-left: 1px solid #6585a1;
`;

const Time = styled.span`
  color: #fff;
  font-size: 13px;
  line-height: 15px;
`;

const DateText = styled.span`
  line-height: 12px;
`;

const Cursor = styled.svg`
  position: absolute;
  top: 541px;
  left: 248px;
`;
